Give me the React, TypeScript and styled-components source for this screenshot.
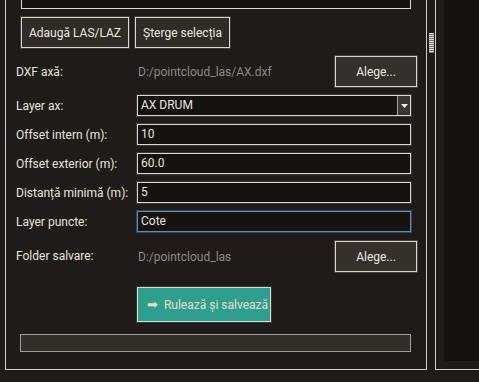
import { createGlobalStyle, styled } from "styled-components";

const GlobalStyle = createGlobalStyle`
  html, body {
    margin: 0;
    padding: 0;
    background: #1e1b18;
  }
  body {
    font-family: Roboto, "Noto Sans", sans-serif;
    font-size: 12px;
    color: #e9e5dd;
  }
`;

const fields = [
  { label: "Offset intern (m):", value: "10" },
  { label: "Offset exterior (m):", value: "60.0" },
  { label: "Distanță minimă (m):", value: "5" },
];

const App = () => {
  return (
    <>
      <GlobalStyle />
      <Screen>
        <LeftPanel>
          <FileList />
          <ButtonRow>
            <ToolButton>Adaugă LAS/LAZ</ToolButton>
            <ToolButton>Șterge selecția</ToolButton>
          </ButtonRow>
          <Form>
            <Label>DXF axă:</Label>
            <PathRow>
              <PathText>D:/pointcloud_las/AX.dxf</PathText>
              <BrowseButton>Alege...</BrowseButton>
            </PathRow>

            <Label>Layer ax:</Label>
            <Combo>
              <ComboText>AX DRUM</ComboText>
              <ComboArrow>
                <svg width="7" height="4" viewBox="0 0 7 4">
                  <path d="M0 0 H7 L3.5 4 Z" fill="#f2efe9" />
                </svg>
              </ComboArrow>
            </Combo>

            {fields.map((f) => (
              <FieldPair key={f.label}>
                <Label>{f.label}</Label>
                <Input>{f.value}</Input>
              </FieldPair>
            ))}

            <Label>Layer puncte:</Label>
            <Input $focused>Cote</Input>

            <Label>Folder salvare:</Label>
            <PathRow $top={1}>
              <PathText>D:/pointcloud_las</PathText>
              <BrowseButton>Alege...</BrowseButton>
            </PathRow>

            <RunCell>
              <RunButton>
                <RunArrow>➡</RunArrow>
                Rulează și salvează
              </RunButton>
            </RunCell>
          </Form>
          <Progress />
        </LeftPanel>
        <SplitHandle>
          <Grip />
        </SplitHandle>
        <RightPanel>
          <RightInner />
        </RightPanel>
      </Screen>
    </>
  );
};

export default App;

const Screen = styled.div`
  width: 479px;
  height: 370px;
  display: flex;
  overflow: hidden;
`;

const LeftPanel = styled.section`
  margin-left: 5px;
  width: 420px;
  flex: none;
  border: 1px solid #d2cdc5;
  border-top: none;
  display: flex;
  flex-direction: column;
`;

const FileList = styled.div`
  height: 8px;
  margin: 0 15px;
  background: #151210;
  border: 1px solid #dcd8d0;
  border-top: none;
`;

const ButtonRow = styled.div`
  display: flex;
  gap: 6px;
  margin: 8px 0 0 15px;
`;

const ToolButton = styled.button`
  height: 31px;
  padding: 0 7px;
  background: #2f2b27;
  border: 1px solid #dcd8d0;
  box-shadow: 0 0 0 1px #3f3b35;
  color: #ece8e0;
  font: inherit;
`;

const Form = styled.div`
  display: grid;
  grid-template-columns: 121px 274px 6px;
  row-gap: 8px;
  align-items: center;
  margin: 8px 0 0 10px;
`;

const FieldPair = styled.div`
  display: contents;
`;

const Label = styled.div`
  grid-column: 1;
  white-space: nowrap;
`;

const PathRow = styled.div<{ $top?: number }>`
  grid-column: 2 / 4;
  display: flex;
  align-items: center;
  justify-content: space-between;
  margin-top: ${({ $top }) => $top ?? 0}px;
`;

const PathText = styled.span`
  color: #8f8982;
  padding-left: 1px;
`;

const BrowseButton = styled.button`
  width: 82px;
  height: 31px;
  background: #34302b;
  border: 1px solid #dcd8d0;
  box-shadow: 0 0 0 1px #45413b;
  color: #ece8e0;
  font: inherit;
`;

const Combo = styled.div`
  grid-column: 2;
  height: 21px;
  display: flex;
  box-sizing: border-box;
  background: #151210;
  border: 1px solid #dcd8d0;
  box-shadow: 0 0 0 1px #3a3631;
`;

const ComboText = styled.span`
  flex: 1;
  padding-left: 3px;
  line-height: 19px;
`;

const ComboArrow = styled.span`
  width: 12px;
  display: flex;
  align-items: center;
  justify-content: center;
  background: #3a3632;
  border-left: 1px solid #a39e96;
`;

const Input = styled.div<{ $focused?: boolean }>`
  grid-column: 2;
  height: 21px;
  box-sizing: border-box;
  padding-left: 3px;
  line-height: 19px;
  background: #151210;
  border: 1px solid ${({ $focused }) => ($focused ? "#5f8cba" : "#dcd8d0")};
  box-shadow: 0 0 0 1px ${({ $focused }) => ($focused ? "#34475a" : "#3a3631")};
`;

const RunCell = styled.div`
  grid-column: 2;
  margin-top: 7px;
`;

const RunButton = styled.button`
  width: 134px;
  height: 35px;
  display: flex;
  align-items: center;
  gap: 6px;
  padding: 0 0 0 9px;
  background: #2f9f8d;
  border: 1px solid #dcd8d0;
  box-shadow: 0 0 0 1px #3a3631;
  color: #e6decd;
  font: inherit;
`;

const RunArrow = styled.span`
  font-family: "DejaVu Sans", sans-serif;
  font-size: 13px;
  line-height: 1;
`;

const Progress = styled.div`
  height: 18px;
  box-sizing: border-box;
  margin: 12px 15px 0 14px;
  background: #322e29;
  border: 1px solid #a39e96;
`;

const SplitHandle = styled.div`
  width: 8px;
  flex: none;
  padding-top: 33px;
  display: flex;
  justify-content: center;
`;

const Grip = styled.div`
  width: 5px;
  height: 20px;
  background: repeating-linear-gradient(
    to bottom,
    #dcd8d0 0 1px,
    #7d7871 1px 2px
  );
`;

const RightPanel = styled.section`
  flex: 1;
  border-left: 1px solid #d2cdc5;
  border-bottom: 1px solid #d2cdc5;
  padding: 0 0 8px 8px;
  display: flex;
`;

const RightInner = styled.div`
  flex: 1;
  background: #151210;
`;
